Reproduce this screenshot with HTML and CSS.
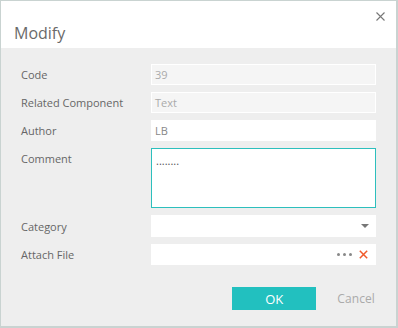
FILE: index.html
```html
<!DOCTYPE html>
<html lang="en">
<head>
  <meta charset="UTF-8" />
  <title>Modify</title>
  <link rel="stylesheet" href="styles.css">
</head>
<body>
  <div class="dialog">
    <div class="dialog-header">
      <h2>Modify</h2>
      <span class="close-btn" aria-label="Close">
        <svg width="9" height="9" viewBox="0 0 9 9"><path d="M0.5 0.5 L8.5 8.5 M8.5 0.5 L0.5 8.5" stroke="#777" stroke-width="1.1" fill="none"/></svg>
      </span>
    </div>

    <div class="dialog-body">
      <div class="form-grid">
        <label>Code</label>
        <div class="field disabled">39</div>

        <label>Related Component</label>
        <div class="field disabled">Text</div>

        <label>Author</label>
        <div class="field">LB</div>

        <label class="top">Comment</label>
        <div class="field textarea">........</div>

        <label>Category</label>
        <div class="field select">
          <span class="caret"></span>
        </div>

        <label>Attach File</label>
        <div class="field file">
          <span class="dots"><i></i><i></i><i></i></span>
          <svg class="clear" width="9" height="9" viewBox="0 0 9 9"><path d="M0.8 0.8 L8.2 8.2 M8.2 0.8 L0.8 8.2" stroke="#f05a2b" stroke-width="1.5" fill="none"/></svg>
        </div>
      </div>

      <div class="btn-row">
        <button class="ok">OK</button>
        <button class="cancel">Cancel</button>
      </div>
    </div>
  </div>
</body>
</html>
```

FILE: styles.css
```css
* {
  box-sizing: border-box;
}
body {
  margin: 0;
  font-family: 'Open Sans', 'Segoe UI', sans-serif;
  background: #fff;
}

/* Dialog frame */
.dialog {
  width: 398px;
  height: 328px;
  border-style: solid;
  border-color: #c9d3d1;
  border-width: 1px 2px 2px 1px;
  display: flex;
  flex-direction: column;
}

/* Header */
.dialog-header {
  position: relative;
  height: 47px;
  background: #fff;
  padding-left: 13px;
}
.dialog-header h2 {
  margin: 0;
  padding-top: 22px;
  font-size: 16px;
  font-weight: 400;
  line-height: 21px;
  color: #6a6a6a;
}
.close-btn {
  position: absolute;
  top: 11px;
  right: 11px;
  width: 9px;
  height: 9px;
  display: flex;
  cursor: pointer;
}

/* Body */
.dialog-body {
  flex: 1;
  background: #eee;
  padding: 16px 20px 0 20px;
}
.form-grid {
  display: grid;
  grid-template-columns: 130px 225px;
  row-gap: 7px;
}
.form-grid label {
  font-size: 11px;
  color: #666;
  display: flex;
  align-items: center;
}
.form-grid label.top {
  align-items: flex-start;
  padding-top: 3px;
}

/* Inputs */
.field {
  height: 21px;
  background: #fff;
  border: 1px solid #fff;
  font-size: 11px;
  color: #888;
  padding: 0 3px;
  display: flex;
  align-items: center;
}
.field.disabled {
  background: #f5f5f5;
  color: #aaa;
}
.field.textarea {
  height: 60px;
  border-color: #2dbfbd;
  align-items: flex-start;
  padding: 5px 4px;
  color: #555;
  line-height: 14px;
}
.field.select {
  height: 22px;
  justify-content: flex-end;
  padding-right: 6px;
}
.caret {
  width: 0;
  height: 0;
  border-left: 4px solid transparent;
  border-right: 4px solid transparent;
  border-top: 4px solid #777;
}
.field.file {
  justify-content: flex-end;
  padding-right: 7px;
  gap: 7px;
}
.dots {
  display: flex;
  gap: 3px;
}
.dots i {
  width: 3px;
  height: 3px;
  border-radius: 50%;
  background: #888;
}

/* Buttons */
.btn-row {
  display: flex;
  justify-content: flex-end;
  align-items: center;
  margin-top: 22px;
  gap: 21px;
}
.btn-row button {
  font-family: inherit;
  border: none;
  cursor: pointer;
  padding: 0;
}
button.ok {
  width: 84px;
  height: 23px;
  background: #22c0bf;
  color: #fff;
  font-size: 13px;
}
button.cancel {
  background: none;
  color: #aaa;
  font-size: 12px;
  margin-right: 1px;
  letter-spacing: 0.1px;
}
```
